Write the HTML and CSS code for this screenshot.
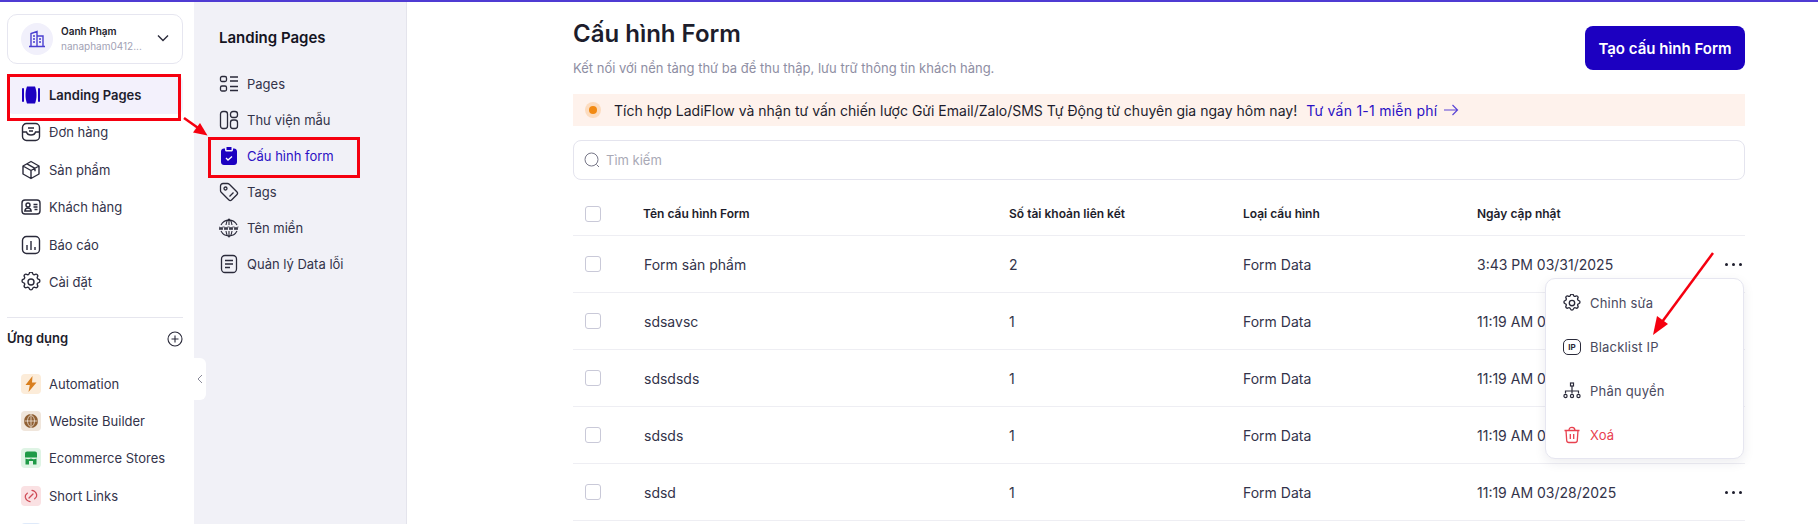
FILE: index.html
```html
<!DOCTYPE html>
<html lang="vi">
<head>
  <meta charset="UTF-8" />
  <title>Cấu hình Form</title>
  <link rel="stylesheet" href="styles.css">
</head>
<body>
  <div class="app">
    <aside class="sidebar">
      <div class="account">
        <span class="avatar">
          <svg width="18" height="18" viewBox="0 0 18 18" fill="none" stroke="#4a3fd0" stroke-width="1.400"><path d="M1 16.500h16M3 16.500V3.500l6-2v15M9 6h6v10.500M5 6h2M5 9h2M5 12h2M11 9h2M11 12h2"/></svg>
        </span>
        <div class="account-info">
          <div class="account-name">Oanh Phạm</div>
          <div class="account-mail">nanapham0412...</div>
        </div>
        <svg class="chevron" width="12" height="8" viewBox="0 0 12 8" fill="none" stroke="#2a2a3a" stroke-width="1.400"><path d="M1 1.500l5 5 5-5"/></svg>
      </div>

      <nav class="nav">
        <a class="nav-item active">
          <svg width="20" height="20" viewBox="0 0 20 20" fill="#1c00c1"><path d="M6 1.500h8c1 2.500 1.500 5.500 1.500 8.500s-.5 6-1.500 8.500H6C5 16 4.500 13 4.500 10S5 4 6 1.500z"/><rect x="1" y="3" width="2" height="14" rx="1"/><rect x="17" y="3" width="2" height="14" rx="1"/></svg>
          Landing Pages
        </a>
        <a class="nav-item">
          <svg width="20" height="20" viewBox="0 0 20 20" fill="none" stroke="#2a2a3a" stroke-width="1.400"><rect x="1.500" y="1.500" width="17" height="17" rx="4"/><path d="M1.500 10h4c.5 2 2 3 4.500 3s4-1 4.500-3h4M7 6h6M8 9h4"/></svg>
          Đơn hàng
        </a>
        <a class="nav-item">
          <svg width="20" height="20" viewBox="0 0 20 20" fill="none" stroke="#2a2a3a" stroke-width="1.400" stroke-linejoin="round"><path d="M10 1.500l8 4.500v8l-8 4.500-8-4.500V6zM2 6l8 4.500L18 6M10 10.500v8M6 3.800l8 4.500v3"/></svg>
          Sản phẩm
        </a>
        <a class="nav-item">
          <svg width="20" height="20" viewBox="0 0 20 20" fill="none" stroke="#2a2a3a" stroke-width="1.400"><rect x="1" y="3" width="18" height="14" rx="3"/><circle cx="7" cy="8" r="2"/><path d="M3.800 14c.3-2 1.500-3 3.200-3s2.900 1 3.200 3zM12.500 7.500h4M12.500 10h4M13.500 12.500h3"/></svg>
          Khách hàng
        </a>
        <a class="nav-item">
          <svg width="20" height="20" viewBox="0 0 20 20" fill="none" stroke="#2a2a3a" stroke-width="1.400"><rect x="1.500" y="1.500" width="17" height="17" rx="4"/><path d="M6 10v5M10 6v9M14 12v3"/></svg>
          Báo cáo
        </a>
        <a class="nav-item">
          <svg width="20" height="20" viewBox="2 2 20 20" fill="none" stroke="#2a2a3a" stroke-width="1.400" stroke-linejoin="round"><path d="M10.300 3.300c.4-1.700 2.900-1.700 3.300 0a1.700 1.700 0 0 0 2.600 1.100c1.500-.9 3.200.8 2.300 2.300a1.700 1.700 0 0 0 1.100 2.600c1.700.4 1.700 2.900 0 3.300a1.700 1.700 0 0 0-1.100 2.600c.9 1.500-.8 3.200-2.300 2.300a1.700 1.700 0 0 0-2.600 1.100c-.4 1.700-2.900 1.700-3.300 0a1.700 1.700 0 0 0-2.600-1.100c-1.500.9-3.200-.8-2.300-2.300a1.700 1.700 0 0 0-1.100-2.600c-1.700-.4-1.700-2.900 0-3.300a1.700 1.700 0 0 0 1.100-2.600c-.9-1.500.8-3.200 2.300-2.300a1.700 1.700 0 0 0 2.600-1.100z"/><circle cx="12" cy="12" r="3"/></svg>
          Cài đặt
        </a>
      </nav>

      <div class="apps-head">
        <span>Ứng dụng</span>
        <svg class="plus" width="16" height="16" viewBox="0 0 16 16" fill="none" stroke="#2a2a3a" stroke-width="1.100"><circle cx="8" cy="8" r="7"/><path d="M8 4.500v7M4.500 8h7"/></svg>
      </div>

      <div class="apps">
        <a class="app-item"><span class="app-icon orange"><svg width="12" height="16" viewBox="0 0 12 16" fill="#d97f1e"><path d="M7.500 0L.5 9h4.300L3.500 16 11.500 6.500H7z"/></svg></span>Automation</a>
        <a class="app-item"><span class="app-icon brown"><svg width="14" height="14" viewBox="0 0 14 14"><circle cx="7" cy="7" r="7" fill="#8f5f33"/><path d="M7 .5c-2.500 2-3.500 4-3.500 6.500s1 4.500 3.500 6.500c2.500-2 3.500-4 3.500-6.500S9.500 2.500 7 .5zM7 .5v13M.5 7h13" fill="none" stroke="#f0e6dc" stroke-width=".8"/></svg></span>Website Builder</a>
        <a class="app-item"><span class="app-icon green"><svg width="14" height="14" viewBox="0 0 14 14" fill="#1f9a47"><path d="M3 .5h8c1.100 0 2 .9 2 2v4H1v-4c0-1.100.9-2 2-2z"/><path d="M1.500 7.500c1.800 1 3.700 1 5.500 0 1.800 1 3.700 1 5.500 0v6H9V10H5v3.500H1.500z"/></svg></span>Ecommerce Stores</a>
        <a class="app-item"><span class="app-icon red"><svg width="14" height="14" viewBox="0 0 14 14" fill="none" stroke="#cf4a55" stroke-width="1.300" stroke-linecap="round"><path d="M8 1.300a6 6 0 0 1 4.700 4.500c.3 1.800-.6 3-2 4M6 12.700a6 6 0 0 1-4.700-4.500c-.3-1.800.6-3 2-4M5 9l4-4"/></svg></span>Short Links</a>
        <a class="app-item"><span class="app-icon blue"></span></a>
      </div>
    </aside>

    <aside class="subnav">
      <button class="collapse">
        <svg width="6" height="10" viewBox="0 0 6 10" fill="none" stroke="#8a8a99" stroke-width="1"><path d="M5 1L1 5l4 4"/></svg>
      </button>
      <h3 class="subnav-title">Landing Pages</h3>
      <a class="sub-item">
        <svg width="20" height="20" viewBox="0 0 20 20" fill="none" stroke="#2a2a3a" stroke-width="1.300"><rect x="1.500" y="2.500" width="6" height="5" rx="1.500"/><rect x="1.500" y="12" width="6" height="5" rx="1.500"/><path d="M11 3h8M11 7h8M11 12.500h8M11 16.500h8"/></svg>
        Pages
      </a>
      <a class="sub-item">
        <svg width="20" height="20" viewBox="0 0 20 20" fill="none" stroke="#2a2a3a" stroke-width="1.300"><rect x="1.500" y="1.500" width="7" height="17" rx="2.500"/><rect x="11.500" y="1.500" width="7" height="6" rx="2.500"/><rect x="11.500" y="10" width="7" height="8.500" rx="2.500"/></svg>
        Thư viện mẫu
      </a>
      <a class="sub-item current">
        <svg width="20" height="20" viewBox="0 0 20 20"><path fill="#1c00c1" d="M5 2.500h1V4c0 .8.700 1.500 1.500 1.500h5c.8 0 1.500-.7 1.500-1.500V2.500h1c1.700 0 3 1.300 3 3V16c0 1.700-1.300 3-3 3H5c-1.700 0-3-1.300-3-3V5.500c0-1.700 1.300-3 3-3zM7.500 1h5v3h-5z"/><path d="M7 12l2 2 4-3.500" fill="none" stroke="#fff" stroke-width="1.300"/></svg>
        Cấu hình form
      </a>
      <a class="sub-item">
        <svg width="20" height="20" viewBox="0 0 20 20" fill="none" stroke="#2a2a3a" stroke-width="1.300" stroke-linejoin="round"><path d="M1.500 4c0-1.400 1.100-2.500 2.500-2.500h4.500c.7 0 1.300.3 1.800.7l7.500 7.500c.9.900.9 2.200 0 3.100l-5 5c-.9.900-2.200.9-3.100 0L2.200 10.300c-.5-.5-.7-1.100-.7-1.800z"/><circle cx="6.500" cy="6.500" r="1.500"/><path d="M10.500 14.500l4-4"/></svg>
        Tags
      </a>
      <a class="sub-item">
        <svg width="20" height="20" viewBox="0 0 20 20" fill="none" stroke="#2a2a3a" stroke-width="1.100"><path d="M2 7a9 9 0 0 1 16 0M2 13a9 9 0 0 0 16 0M7 7c.5-3 1.500-5.500 3-6 1.500.5 2.500 3 3 6M7 13c.5 3 1.500 5.500 3 6 1.500-.5 2.500-3 3-6M10 1v6M10 13v6"/><path d="M0 8.500l1 3.500 1-3 1 3 1-3.500M5 8.500l1 3.500 1-3 1 3 1-3.500M10 8.500l1 3.500 1-3 1 3 1-3.500M15 8.500l1 3.500 1-3 1 3 1-3.500" stroke-width=".9"/></svg>
        Tên miền
      </a>
      <a class="sub-item">
        <svg width="20" height="20" viewBox="0 0 20 20" fill="none" stroke="#2a2a3a" stroke-width="1.300"><rect x="2.500" y="1.500" width="15" height="17" rx="3.500"/><path d="M6 6.500h8M6 10h8M6 13.500h5"/></svg>
        Quản lý Data lỗi
      </a>
    </aside>

    <main class="main">
      <div class="head">
        <div>
          <h1>Cấu hình Form</h1>
          <p class="sub">Kết nối với nền tảng thứ ba để thu thập, lưu trữ thông tin khách hàng.</p>
        </div>
        <button class="btn-primary">Tạo cấu hình Form</button>
      </div>

      <div class="banner">
        <span class="dot"></span>
        <span>Tích hợp LadiFlow và nhận tư vấn chiến lược Gửi Email/Zalo/SMS Tự Động từ chuyên gia ngay hôm nay!</span>
        <a class="banner-link">Tư vấn 1-1 miễn phí
          <svg width="16" height="12" viewBox="0 0 16 12" fill="none" stroke="#5a45d6" stroke-width="1.200"><path d="M1 6h13.500M9.500 1l5 5-5 5"/></svg>
        </a>
      </div>

      <div class="search">
        <svg width="16" height="16" viewBox="0 0 16 16" fill="none" stroke="#777788" stroke-width="1"><circle cx="7.500" cy="7.500" r="6.500"/><path d="M12.500 12.500l2.500 2.500"/></svg>
        <span>Tìm kiếm</span>
      </div>

      <div class="table">
        <div class="row row-head">
          <span class="check"></span><span>Tên cấu hình Form</span><span>Số tài khoản liên kết</span><span>Loại cấu hình</span><span>Ngày cập nhật</span><span></span>
        </div>
        <div class="row">
          <span class="check"></span><span>Form sản phẩm</span><span>2</span><span>Form Data</span><span>3:43 PM 03/31/2025</span><span class="more"><i></i><i></i><i></i></span>
        </div>
        <div class="row">
          <span class="check"></span><span>sdsavsc</span><span>1</span><span>Form Data</span><span>11:19 AM 03/28/2025</span><span class="more"><i></i><i></i><i></i></span>
        </div>
        <div class="row">
          <span class="check"></span><span>sdsdsds</span><span>1</span><span>Form Data</span><span>11:19 AM 03/28/2025</span><span class="more"><i></i><i></i><i></i></span>
        </div>
        <div class="row">
          <span class="check"></span><span>sdsds</span><span>1</span><span>Form Data</span><span>11:19 AM 03/28/2025</span><span class="more"><i></i><i></i><i></i></span>
        </div>
        <div class="row">
          <span class="check"></span><span>sdsd</span><span>1</span><span>Form Data</span><span>11:19 AM 03/28/2025</span><span class="more"><i></i><i></i><i></i></span>
        </div>

        <div class="menu">
          <a class="menu-item">
            <svg width="18" height="18" viewBox="2 2 20 20" fill="none" stroke="#2a2a3a" stroke-width="1.500" stroke-linejoin="round"><path d="M10.300 3.300c.4-1.700 2.900-1.700 3.300 0a1.700 1.700 0 0 0 2.600 1.100c1.500-.9 3.200.8 2.300 2.300a1.700 1.700 0 0 0 1.100 2.600c1.700.4 1.700 2.900 0 3.300a1.700 1.700 0 0 0-1.100 2.600c.9 1.500-.8 3.200-2.300 2.300a1.700 1.700 0 0 0-2.600 1.100c-.4 1.700-2.900 1.700-3.300 0a1.700 1.700 0 0 0-2.600-1.100c-1.500.9-3.200-.8-2.300-2.300a1.700 1.700 0 0 0-1.100-2.600c-1.700-.4-1.700-2.900 0-3.300a1.700 1.700 0 0 0 1.100-2.600c-.9-1.500.8-3.200 2.300-2.300a1.700 1.700 0 0 0 2.600-1.100z"/><circle cx="12" cy="12" r="3"/></svg>
            Chỉnh sửa
          </a>
          <a class="menu-item">
            <span class="ip-icon">IP</span>
            Blacklist IP
          </a>
          <a class="menu-item">
            <svg width="18" height="18" viewBox="0 0 18 18" fill="none" stroke="#2a2a3a" stroke-width="1.200"><rect x="7.500" y="1" width="3" height="3"/><path d="M9 4v5M2.500 11.500V9h13v2.500M9 9v2.500"/><circle cx="2.500" cy="14" r="1.600"/><circle cx="9" cy="14" r="1.600"/><circle cx="15.500" cy="14" r="1.600"/></svg>
            Phân quyền
          </a>
          <a class="menu-item danger">
            <svg width="18" height="18" viewBox="0 0 18 18" fill="none" stroke="#e8414f" stroke-width="1.300"><path d="M1.500 4.500h15M6 4.500c0-2 .8-3.200 3-3.200s3 1.200 3 3.200M3 4.500l.7 10c.1 1.200 1 2 2.200 2h6.200c1.200 0 2.100-.8 2.200-2l.7-10M7.300 8v5M10.700 8v5"/></svg>
            Xoá
          </a>
        </div>
      </div>
    </main>
  </div>

  <!-- chú thích đỏ vẽ đè lên ảnh -->
  <svg class="marks" width="1818" height="524" viewBox="0 0 1818 524" fill="none">
    <rect x="8.500" y="75.500" width="171" height="44" stroke="#f5000f" stroke-width="3"/>
    <rect x="209.500" y="138.500" width="149" height="38" stroke="#f5000f" stroke-width="3"/>
    <path d="M184 118L201 130" stroke="#f5000f" stroke-width="2.500"/>
    <path d="M207.500 135.500L193 132.500L200 123z" fill="#f5000f"/>
    <path d="M1713 253L1662 322" stroke="#f5000f" stroke-width="2.500"/>
    <path d="M1653 335L1657 316L1668 324z" fill="#f5000f"/>
  </svg>
</body>
</html>
```

FILE: styles.css
```css
* {
  box-sizing: border-box;
}
html, body {
  margin: 0;
  height: 524px;
  overflow: hidden;
}
body {
  font-family: Inter, "Noto Sans", sans-serif;
  font-size: 14px;
  color: #1d1d2c;
  background: #fff;
  position: relative;
}
a {
  color: inherit;
  text-decoration: none;
}
svg {
  flex: none;
}

.app {
  display: flex;
  height: 524px;
  border-top: 2px solid #4f3bd3;
}

/* sidebar */
.sidebar {
  width: 194px;
  flex: none;
  padding: 12px 11px 0 7px;
  overflow: hidden;
}
.account {
  display: flex;
  align-items: center;
  height: 50px;
  padding: 0 13px 0 13px;
  border: 1px solid #e6e6f0;
  border-radius: 10px;
}
.avatar {
  width: 32px;
  height: 32px;
  border-radius: 50%;
  background: #f1f0fb;
  display: flex;
  align-items: center;
  justify-content: center;
  flex: none;
}
.account-info {
  flex: 1;
  margin-left: 8px;
  min-width: 0;
}
.account-name {
  font-size: 10px;
  font-weight: 600;
  line-height: 15px;
}
.account-mail {
  font-size: 10px;
  color: #a2a2b5;
  line-height: 15px;
}
.chevron {
  margin-bottom: 2px;
}
.nav {
  margin-top: 12px;
  padding-bottom: 16px;
  border-bottom: 1px solid #e6e6ee;
}
.nav-item {
  display: flex;
  align-items: center;
  gap: 8px;
  height: 37.500px;
  padding-left: 14px;
  font-size: 13px;
  color: #33334a;
  border-radius: 6px;
}
.nav-item.active {
  background: #f3f1fc;
  font-weight: 600;
  color: #1d1d2c;
}
.apps-head {
  display: flex;
  align-items: center;
  justify-content: space-between;
  height: 40px;
  font-size: 13px;
  font-weight: 600;
  margin-bottom: 7px;
}
.plus {
  margin-top: 2px;
}
.app-item {
  display: flex;
  align-items: center;
  gap: 8px;
  height: 37.300px;
  padding-left: 14px;
  font-size: 13px;
  color: #33334a;
  white-space: nowrap;
}
.app-icon {
  width: 20px;
  height: 20px;
  border-radius: 4px;
  display: flex;
  align-items: center;
  justify-content: center;
  flex: none;
}
.orange { background: #fcecd9; }
.brown { background: #f0e6dc; }
.green { background: #dff4e5; }
.red { background: #fae1e3; }
.blue { background: #dfeafa; }

/* cột thứ hai */
.subnav {
  width: 213px;
  flex: none;
  background: #f1f1f7;
  border-right: 1px solid #e4e4ec;
  padding: 26px 0 0 25px;
  position: relative;
}
.subnav-title {
  margin: 0 0 18px;
  font-size: 15px;
  font-weight: 600;
  line-height: 20px;
  color: #14141f;
}
.sub-item {
  display: flex;
  align-items: center;
  gap: 8px;
  height: 36px;
  font-size: 13px;
  color: #33334a;
}
.sub-item.current {
  color: #2b10c4;
}
.collapse {
  position: absolute;
  left: 0;
  top: 356px;
  width: 12px;
  height: 42px;
  padding: 0;
  border: 0;
  background: #fff;
  border-radius: 0 6px 6px 0;
  display: flex;
  align-items: center;
  justify-content: center;
}

/* nội dung */
.main {
  flex: 1;
  padding: 16px 73px 0 166px;
  min-width: 0;
}
.head {
  display: flex;
  justify-content: space-between;
  align-items: flex-start;
}
h1 {
  margin: 1px 0 0;
  font-size: 24px;
  font-weight: 600;
  line-height: 30px;
}
.sub {
  margin: 9px 0 0;
  font-size: 13px;
  line-height: 20px;
  color: #8e8ea3;
}
.btn-primary {
  margin-top: 8px;
  width: 160px;
  height: 44px;
  border: 0;
  border-radius: 8px;
  background: #1c00c1;
  color: #fff;
  font-family: inherit;
  font-size: 15px;
  font-weight: 600;
}
.banner {
  display: flex;
  align-items: center;
  height: 32px;
  margin-top: 16px;
  padding-left: 12px;
  background: #fef2ec;
}
.dot {
  width: 8px;
  height: 8px;
  margin: 0 4px;
  border-radius: 50%;
  background: #f28a13;
  box-shadow: 0 0 0 4px #fcdcbf;
  flex: none;
}
.banner > span:nth-child(2) {
  margin-left: 13px;
}
.banner-link {
  margin-left: 9px;
  color: #2b10c4;
  letter-spacing: .25px;
  display: flex;
  align-items: center;
  gap: 6px;
}
.search {
  display: flex;
  align-items: center;
  gap: 6px;
  height: 40px;
  margin-top: 14px;
  padding-left: 10px;
  border: 1px solid #e4e4ee;
  border-radius: 8px;
  font-size: 13px;
  color: #a9a9b6;
}

/* bảng */
.table {
  position: relative;
  margin-top: 13px;
}
.row {
  display: grid;
  grid-template-columns: 71px 365px 234px 234px 1fr 34px;
  align-items: center;
  height: 57px;
  border-bottom: 1px solid #eeeef3;
  color: #33334a;
  white-space: nowrap;
}
.row-head {
  height: 43px;
  font-size: 12px;
  font-weight: 600;
  color: #1d1d2c;
}
.row-head > span:not(.check) {
  margin-bottom: 2px;
}
.row-head > span:nth-child(2) {
  margin-left: -1px;
}
.check {
  display: block;
  width: 16px;
  height: 16px;
  margin-left: 12px;
  border: 1px solid #c9c9d8;
  border-radius: 3px;
}
.more {
  display: flex;
  gap: 4px;
  justify-content: flex-end;
  padding-right: 3px;
}
.more i {
  width: 3px;
  height: 3px;
  border-radius: 50%;
  background: #1d1d2c;
}

/* menu thao tác */
.menu {
  position: absolute;
  top: 85px;
  right: 1px;
  width: 199px;
  height: 181px;
  padding: 2px 0;
  background: #fff;
  border: 1px solid #e6e6f0;
  border-radius: 10px;
  box-shadow: 0 4px 12px rgba(30, 30, 60, .08);
}
.menu-item {
  display: flex;
  align-items: center;
  gap: 9px;
  height: 44px;
  padding-left: 17px;
  font-size: 13px;
  letter-spacing: .2px;
  color: #4a4a5e;
}
.menu-item.danger {
  color: #e8414f;
}
.ip-icon {
  width: 18px;
  height: 16px;
  border: 1.300px solid #2a2a3a;
  border-radius: 5px;
  font-size: 8px;
  font-weight: 700;
  letter-spacing: 0;
  color: #2a2a3a;
  display: flex;
  align-items: center;
  justify-content: center;
  flex: none;
}

.marks {
  position: absolute;
  left: 0;
  top: 0;
  pointer-events: none;
}
```
